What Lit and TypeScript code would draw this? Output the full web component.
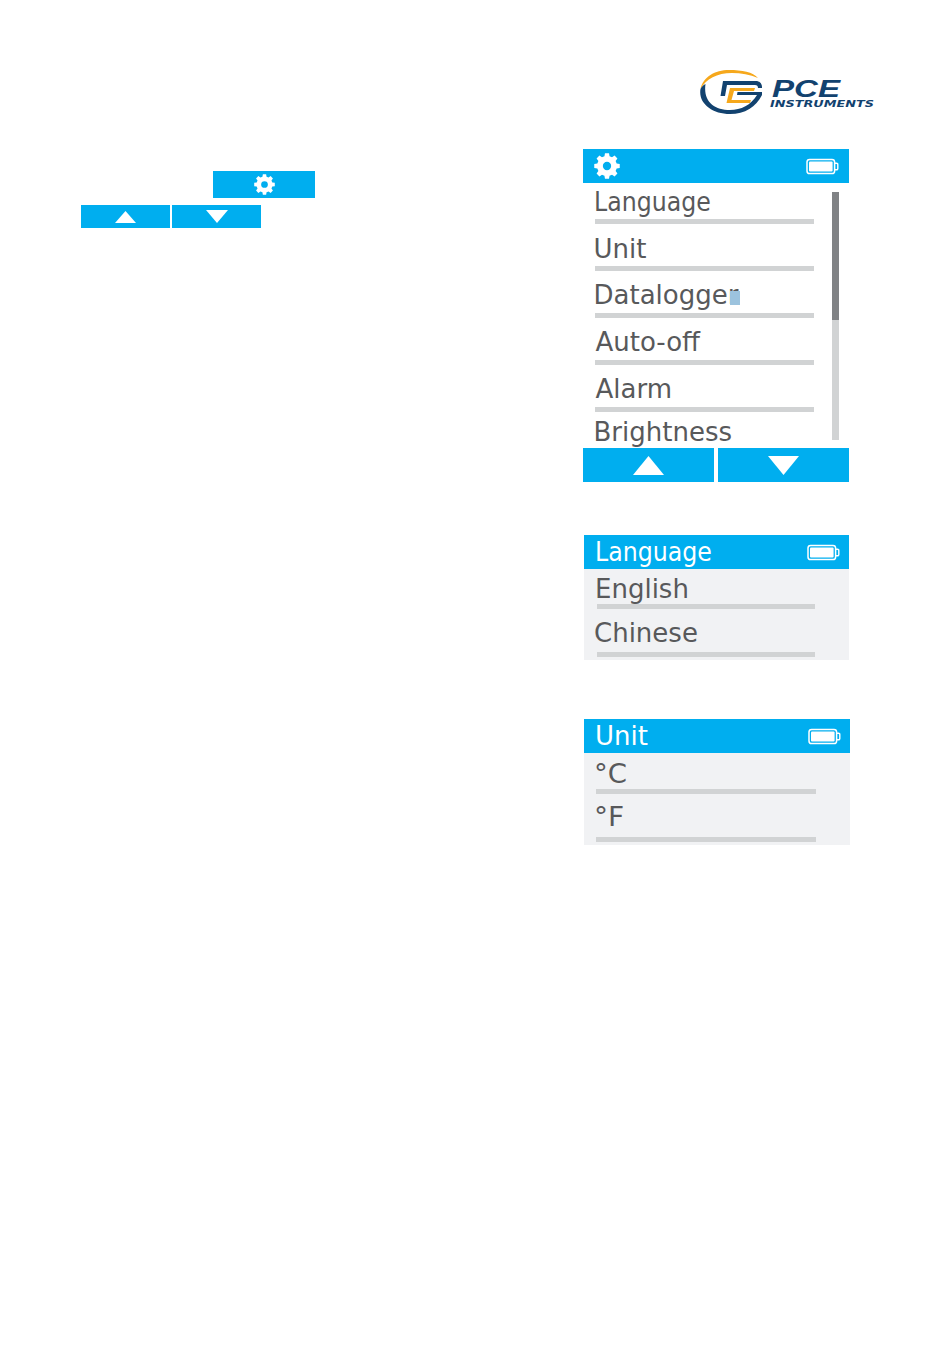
import { LitElement, html, css } from "lit";
import { customElement } from "lit/decorators.js";

const gearPath = (() => {
  const teeth = 8, R = 12.4, r = 9.6, hole = 4;
  let d = "";
  const step = (Math.PI * 2) / teeth;
  for (let i = 0; i < teeth; i++) {
    const a = i * step - Math.PI / 2;
    const pts: [number, number][] = [
      [r, a - step * 0.33],
      [R, a - step * 0.2],
      [R, a + step * 0.2],
      [r, a + step * 0.33],
    ];
    for (const [rad, t] of pts) {
      d += `${d ? "L" : "M"}${(rad * Math.cos(t)).toFixed(2)} ${(rad * Math.sin(t)).toFixed(2)}`;
    }
  }
  d += `Z M${hole} 0A${hole} ${hole} 0 1 0 ${-hole} 0A${hole} ${hole} 0 1 0 ${hole} 0Z`;
  return d;
})();

const gear = (size: number) => html`<svg width=${size} height=${size} viewBox="-12.5 -12.5 25 25">
  <path d=${gearPath} fill="#fff" fill-rule="evenodd"></path>
</svg>`;

const battery = html`<svg class="battery" width="33" height="19" viewBox="0 0 33 19">
  <rect x="1" y="2.500" width="27.6" height="14" rx="2.6" fill="none" stroke="#fff" stroke-width="1.5"></rect>
  <rect x="3" y="4.500" width="23.6" height="10" rx="1" fill="#fff"></rect>
  <path d="M29 6.200h1.600a1.200 1.200 0 0 1 1.200 1.200v4.200a1.200 1.200 0 0 1-1.200 1.200H29" fill="none" stroke="#fff" stroke-width="1.400"></path>
</svg>`;

const triUp = (w: number, h: number) => html`<svg width=${w} height=${h} viewBox="0 0 30 20" preserveAspectRatio="none"><path d="M15 0L30 20H0Z" fill="#fff"></path></svg>`;
const triDown = (w: number, h: number) => html`<svg width=${w} height=${h} viewBox="0 0 30 20" preserveAspectRatio="none"><path d="M0 0H30L15 20Z" fill="#fff"></path></svg>`;

const logo = html`<svg class="logo" width="176" height="46" viewBox="0 0 176 46">
  <path d="M1.500 20C4 8 16 1 30 1C43 1 54 3 59 9C51 5.500 42 4 33 4C18 4 7 10 1.500 20Z" fill="#f6a81c"></path>
  <path d="M1.500 20C-1 34 13 45 31 45C46 45 57 38 63 26L58 26C52 36 42 41 31 41C15 41 4 32 6.500 15C4 16 2.500 18 1.500 20Z" fill="#12426f"></path>
  <path d="M24 12H57C60 12 63 14 63 18L63 19L59 19C59 17 58 16 56 16H28L26 27H21.500Z" fill="#12426f"></path>
  <path d="M31 19H56L55 22H35L32.500 31H52L51 34H27.500Z" fill="#f6a81c"></path>
  <path d="M38.500 23H63V26H38Z" fill="#12426f"></path>
  <text class="pce" x="73" y="28" textLength="68" lengthAdjust="spacingAndGlyphs">PCE</text>
  <text class="ins" x="71" y="37.500" textLength="104" lengthAdjust="spacingAndGlyphs">INSTRUMENTS</text>
</svg>`;

interface Row { label: string; x: number; h: number; sep?: boolean; cursor?: boolean; sx?: number; dy?: number; }

const mainRows: Row[] = [
  { label: "Language", x: 10.5, h: 41, sep: true, sx: 0.91, dy: 1 },
  { label: "Unit", x: 10.5, h: 47, sep: true, dy: 1 },
  { label: "Datalogger", x: 10.5, h: 47, sep: true, cursor: true },
  { label: "Auto-off", x: 12.5, h: 47, sep: true },
  { label: "Alarm", x: 12.5, h: 47, sep: true },
  { label: "Brightness", x: 10.5, h: 36, dy: -1 },
];
const langRows: Row[] = [
  { label: "English", x: 11, h: 40, sep: true, dy: 3 },
  { label: "Chinese", x: 10, h: 48, sep: true, dy: -1 },
];
const unitRows: Row[] = [
  { label: "°C", x: 10, h: 41, sep: true, sx: 1.06, dy: 3 },
  { label: "°F", x: 10, h: 48, sep: true, sx: 1.08, dy: -2 },
];

@customElement("app-root")
export class AppRoot extends LitElement {
  static styles = css`
    :host { display: block; width: 950px; height: 1364px; background: #fff; overflow: hidden;
      font-family: "DejaVu Sans", Verdana, sans-serif; color: #58595b; }
    .head { display: flex; justify-content: flex-end; padding: 69px 75px 0 0; height: 149px; box-sizing: border-box; }
    .logo { display: block; flex: none; }
    .pce { font: italic 700 24px "Liberation Sans", Arial, sans-serif; fill: #12426f; }
    .ins { font: italic 700 9.500px "DejaVu Sans", sans-serif; fill: #12426f; }
    .main { display: flex; }
    .left { width: 583px; flex: none; padding: 22px 0 0 81px; box-sizing: border-box; }
    .btn { background: #00aeef; display: flex; align-items: center; justify-content: center; }
    .settings { width: 102px; height: 27px; margin-left: 132px; }
    .pair { display: flex; gap: 2px; margin-top: 7px; }
    .pair .btn { width: 89px; height: 23px; }
    .right { display: flex; flex-direction: column; }
    .bar { background: #00aeef; color: #fff; height: 34px; display: flex; align-items: center;
      justify-content: space-between; font-size: 26px; padding: 0 10px 0 11px; box-sizing: border-box; }
    .bar .title { transform-origin: left center; line-height: 34px; }
    .battery { display: block; flex: none; }
    .panel1 { width: 266px; }
    .panel2 { width: 265px; margin: 53px 0 0 1px; background: #f1f2f4; height: 125px; }
    .panel3 { width: 266px; margin: 59px 0 0 1px; background: #f1f2f4; height: 126px; }
    .panel2 .bar, .panel3 .bar { padding-right: 9px; }
    .body { display: flex; height: 265px; }
    .list { width: 231px; flex: none; }
    .row { display: flex; flex-direction: column; justify-content: flex-end; position: relative; box-sizing: border-box; }
    .label { font-size: 26px; line-height: 30px; white-space: nowrap; transform-origin: left center; }
    .sep { height: 5px; background: #d1d3d4; width: 219px; margin: 3px 0 0 12px; flex: none; }
    .cursor { position: absolute; left: 147px; top: 20px; width: 10px; height: 14px; background: #9cc3de; }
    .scroll { width: 7px; height: 248px; margin: 9px 0 0 18px; background: #d1d3d4; flex: none; }
    .thumb { height: 128px; background: #808285; }
    .foot { display: flex; gap: 4px; }
    .foot .btn { flex: 1; height: 34px; }
    .list2 { width: 231px; }
    .list2 .sep { margin-left: 13px; width: 218px; }
    .list3 .sep { margin-left: 12px; width: 220px; }
  `;

  private rows(rows: Row[]) {
    return rows.map(r => html`<div class="row" style="height:${r.h}px">
      <div class="label" style="margin-left:${r.x}px;transform:translateY(${r.dy ?? 0}px) scaleX(${r.sx ?? 1})">${r.label}</div>
      ${r.sep ? html`<div class="sep"></div>` : ""}
      ${r.cursor ? html`<div class="cursor"></div>` : ""}
    </div>`);
  }

  render() {
    return html`
      <div class="head">${logo}</div>
      <div class="main">
        <div class="left">
          <div class="btn settings">${gear(21)}</div>
          <div class="pair">
            <div class="btn">${triUp(21, 12)}</div>
            <div class="btn">${triDown(22, 13)}</div>
          </div>
        </div>
        <div class="right">
          <div class="panel1">
            <div class="bar">${gear(26)}${battery}</div>
            <div class="body">
              <div class="list">${this.rows(mainRows)}</div>
              <div class="scroll"><div class="thumb"></div></div>
            </div>
            <div class="foot">
              <div class="btn">${triUp(31, 19)}</div>
              <div class="btn">${triDown(31, 19)}</div>
            </div>
          </div>
          <div class="panel2">
            <div class="bar"><span class="title" style="transform:scaleX(.91)">Language</span>${battery}</div>
            <div class="list2">${this.rows(langRows)}</div>
          </div>
          <div class="panel3">
            <div class="bar"><span class="title">Unit</span>${battery}</div>
            <div class="list2 list3">${this.rows(unitRows)}</div>
          </div>
        </div>
      </div>
    `;
  }
}
